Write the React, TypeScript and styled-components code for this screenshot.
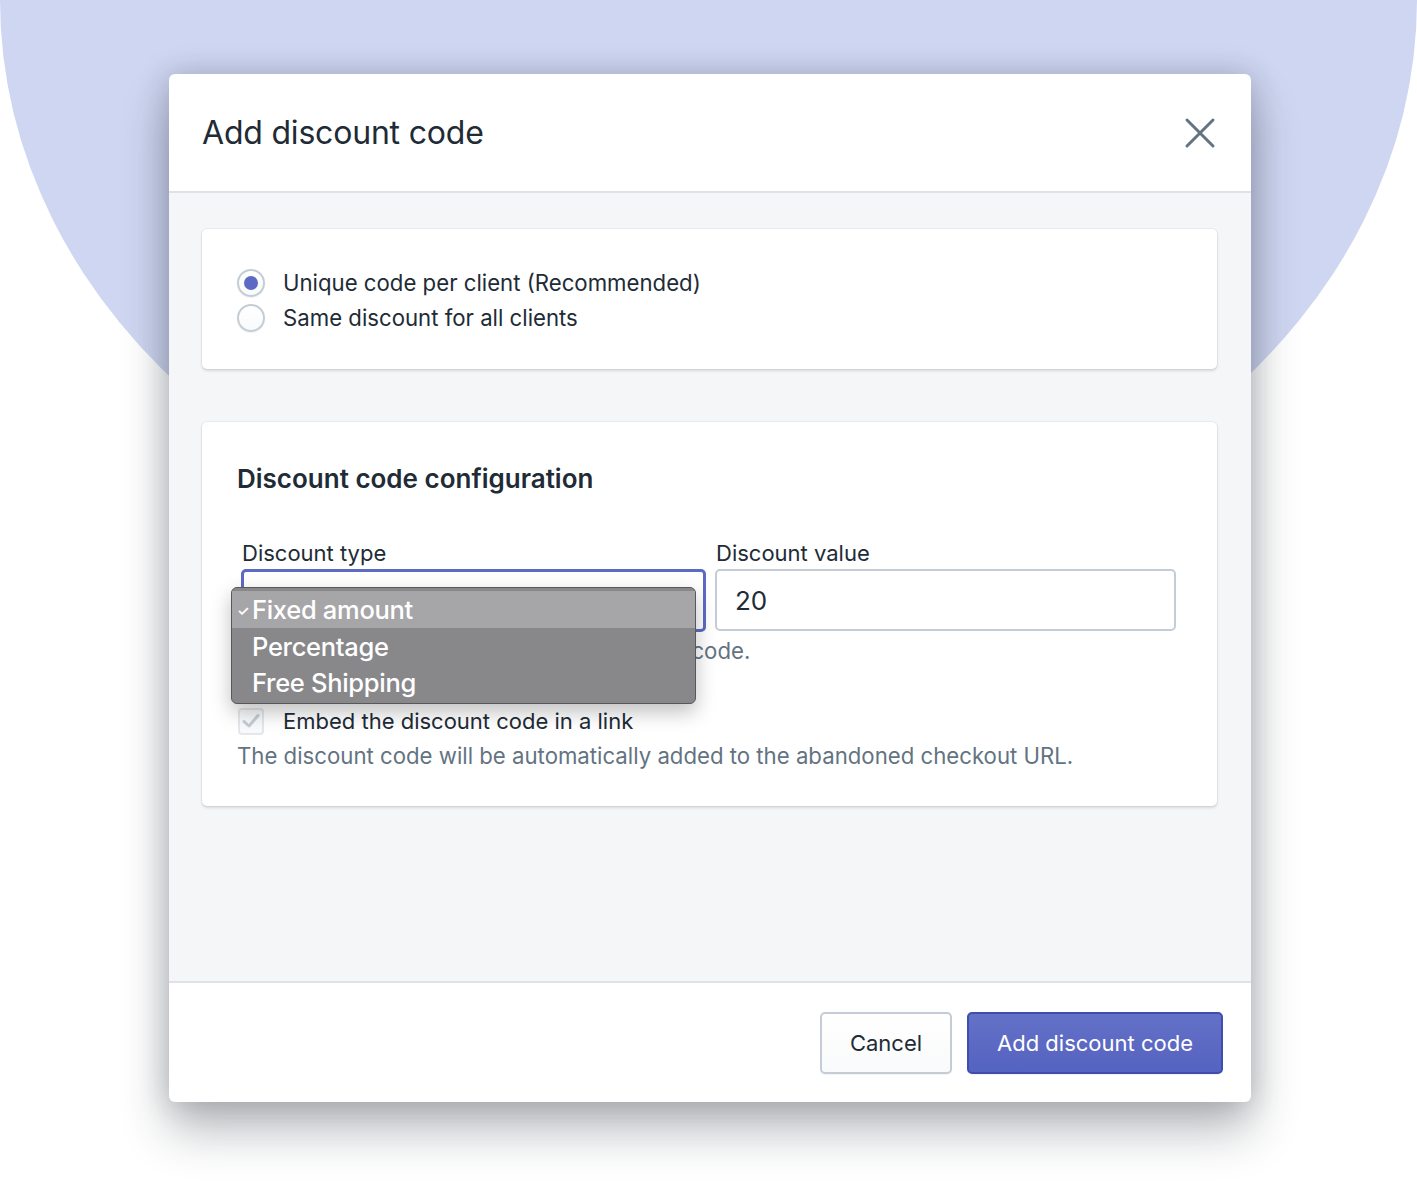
import React from 'react';
import styled, { createGlobalStyle } from 'styled-components';

const GlobalStyle = createGlobalStyle`
  html, body {
    margin: 0;
    padding: 0;
    background: #ffffff;
  }
  body {
    font-family: Inter, "Noto Sans", "Liberation Sans", sans-serif;
    color: #212b36;
    -webkit-font-smoothing: antialiased;
  }
  * { box-sizing: border-box; }
`;

const Stage = styled.div`
  position: relative;
  width: 1417px;
  height: 1191px;
  overflow: hidden;
  padding-top: 74px;

  &::before {
    content: '';
    position: absolute;
    left: 0;
    top: -580px;
    width: 1417px;
    height: 1160px;
    border-radius: 50%;
    background: #cfd6f1;
  }
`;

const Modal = styled.div`
  position: relative;
  width: 1082px;
  margin-left: 169px;
  background: #ffffff;
  border-radius: 6px;
  overflow: hidden;
  box-shadow: 0 28px 48px rgba(33, 43, 54, 0.32), 0 0 30px rgba(33, 43, 54, 0.22);
`;

const Header = styled.header`
  height: 119px;
  display: flex;
  align-items: center;
  justify-content: space-between;
  padding: 0 34px 0 33px;
  border-bottom: 2px solid #dfe3e8;
`;

const Title = styled.h2`
  margin: 0;
  font-size: 32px;
  font-weight: 400;
  letter-spacing: -0.2px;
  color: #212b36;
`;

const CloseButton = styled.button`
  display: flex;
  align-items: center;
  justify-content: center;
  width: 40px;
  height: 40px;
  padding: 0;
  margin-right: -3px;
  border: 0;
  background: none;
  color: #637381;
`;

const Body = styled.div`
  height: 788px;
  background: #f4f6f8;
  padding: 36px 34px 0 33px;
`;

const Card = styled.section<{ $gap?: number }>`
  background: #ffffff;
  border-radius: 5px;
  box-shadow: 0 0 0 1px rgba(63, 63, 68, 0.06), 0 2px 3px rgba(63, 63, 68, 0.15);
  margin-bottom: ${({ $gap }) => $gap ?? 0}px;
`;

const ChoiceCard = styled(Card)`
  padding: 36px 35px 34px;
`;

const ConfigCard = styled(Card)`
  padding: 41px 35px 35px;
`;

const ChoiceRow = styled.label`
  display: flex;
  align-items: center;
  height: 35px;
  gap: 18px;
  font-size: 22.2px;
  color: #212b36;
`;

const Radio = styled.span<{ $checked?: boolean }>`
  width: 28px;
  height: 28px;
  border-radius: 50%;
  border: 2px solid #c4cdd5;
  background: linear-gradient(180deg, #ffffff, #f9fafb);
  box-shadow: 0 1px 1px rgba(22, 29, 37, 0.06);
  display: flex;
  align-items: center;
  justify-content: center;

  &::after {
    content: '';
    width: 14px;
    height: 14px;
    border-radius: 50%;
    background: #5c6ac4;
    display: ${({ $checked }) => ($checked ? 'block' : 'none')};
  }
`;

const Heading = styled.h3`
  margin: 0 0 43px;
  font-size: 26px;
  line-height: 32px;
  font-weight: 600;
  color: #212b36;
`;

const FieldGrid = styled.div`
  display: grid;
  grid-template-columns: 465px 461px;
  column-gap: 9px;
  margin-left: 4px;
`;

const Field = styled.div`
  display: flex;
  flex-direction: column;
`;

const Label = styled.label`
  font-size: 22px;
  line-height: 30px;
  margin-left: 1px;
  margin-bottom: 1px;
  color: #212b36;
`;

const SelectWrap = styled.div`
  position: relative;
`;

const SelectBox = styled.div`
  height: 63px;
  border: 3px solid #5c6ac4;
  border-radius: 5px;
  background: #ffffff;
`;

const TextInput = styled.div`
  height: 62px;
  border: 2px solid #c4cdd5;
  border-radius: 5px;
  background: #ffffff;
  display: flex;
  align-items: center;
  padding-left: 18px;
  font-size: 26px;
  color: #212b36;
`;

const Popup = styled.ul`
  position: absolute;
  left: -10px;
  top: 18px;
  width: 465px;
  margin: 0;
  padding: 3px 0;
  list-style: none;
  background: #88888b;
  border: 1px solid #58585b;
  border-radius: 6px;
  box-shadow: 0 8px 20px rgba(0, 0, 0, 0.25);
  z-index: 2;
`;

const Option = styled.li<{ $active?: boolean }>`
  position: relative;
  display: flex;
  align-items: center;
  padding-left: 20px;
  font-size: 25.5px;
  font-weight: 500;
  letter-spacing: -0.3px;
  color: #ffffff;
  background: ${({ $active }) => ($active ? '#a6a6a8' : 'transparent')};
  height: ${({ $active }) => ($active ? '37px' : '36px')};
`;

const Tick = styled.span`
  position: absolute;
  left: 5px;
  top: 50%;
  transform: translateY(-50%);
  font-size: 14px;
  font-weight: 600;
`;

const HelpText = styled.p<{ $top: number }>`
  margin: ${({ $top }) => $top}px 0 0;
  font-size: 22.2px;
  line-height: 30px;
  color: #637381;
`;

const CheckRow = styled.label`
  display: flex;
  align-items: center;
  gap: 19px;
  height: 28px;
  margin-top: 41px;
  font-size: 22px;
  color: #212b36;
`;

const Checkbox = styled.span`
  width: 26px;
  height: 27px;
  margin-left: 1px;
  border: 2px solid #e4e8ec;
  border-radius: 4px;
  background: #f9fafb;
  display: flex;
  align-items: center;
  justify-content: center;
  color: #c4cdd5;
`;

const Footer = styled.footer`
  height: 121px;
  border-top: 2px solid #dfe3e8;
  display: flex;
  align-items: center;
  justify-content: flex-end;
  gap: 15px;
  padding-right: 28px;
`;

const Button = styled.button<{ $primary?: boolean }>`
  height: 62px;
  padding: 0 28px;
  border-radius: 5px;
  font-family: inherit;
  font-size: 22px;
  border: 2px solid ${({ $primary }) => ($primary ? '#3f4eae' : '#c4cdd5')};
  background: ${({ $primary }) =>
    $primary ? 'linear-gradient(180deg, #6371c7, #5563c1)' : 'linear-gradient(180deg, #ffffff, #f9fafb)'};
  color: ${({ $primary }) => ($primary ? '#ffffff' : '#212b36')};
  box-shadow: 0 1px 0 rgba(22, 29, 37, 0.05);
`;

const options = ['Fixed amount', 'Percentage', 'Free Shipping'];

export default function App() {
  return (
    <>
      <GlobalStyle />
      <Stage>
        <Modal>
          <Header>
            <Title>Add discount code</Title>
            <CloseButton aria-label="Close">
              <svg width="32" height="32" viewBox="0 0 32 32">
                <path d="M3 3 L29 29 M29 3 L3 29" stroke="currentColor" strokeWidth="3" strokeLinecap="round" />
              </svg>
            </CloseButton>
          </Header>
          <Body>
            <ChoiceCard $gap={53}>
              <ChoiceRow>
                <Radio $checked />
                Unique code per client (Recommended)
              </ChoiceRow>
              <ChoiceRow>
                <Radio />
                Same discount for all clients
              </ChoiceRow>
            </ChoiceCard>
            <ConfigCard>
              <Heading>Discount code configuration</Heading>
              <FieldGrid>
                <Field>
                  <Label>Discount type</Label>
                  <SelectWrap>
                    <SelectBox />
                    <Popup>
                      {options.map((o, i) => (
                        <Option key={o} $active={i === 0}>
                          {i === 0 && <Tick>✓</Tick>}
                          {o}
                        </Option>
                      ))}
                    </Popup>
                  </SelectWrap>
                </Field>
                <Field>
                  <Label>Discount value</Label>
                  <TextInput>20</TextInput>
                </Field>
              </FieldGrid>
              <HelpText $top={4}>Choose the type of value for your discount code.</HelpText>
              <CheckRow>
                <Checkbox>
                  <svg width="18" height="16" viewBox="0 0 18 16">
                    <path d="M2 8.5 L7 13 L16 2.5" fill="none" stroke="currentColor" strokeWidth="3" strokeLinecap="round" strokeLinejoin="round" />
                  </svg>
                </Checkbox>
                Embed the discount code in a link
              </CheckRow>
              <HelpText $top={6}>The discount code will be automatically added to the abandoned checkout URL.</HelpText>
            </ConfigCard>
          </Body>
          <Footer>
            <Button>Cancel</Button>
            <Button $primary>Add discount code</Button>
          </Footer>
        </Modal>
      </Stage>
    </>
  );
}
